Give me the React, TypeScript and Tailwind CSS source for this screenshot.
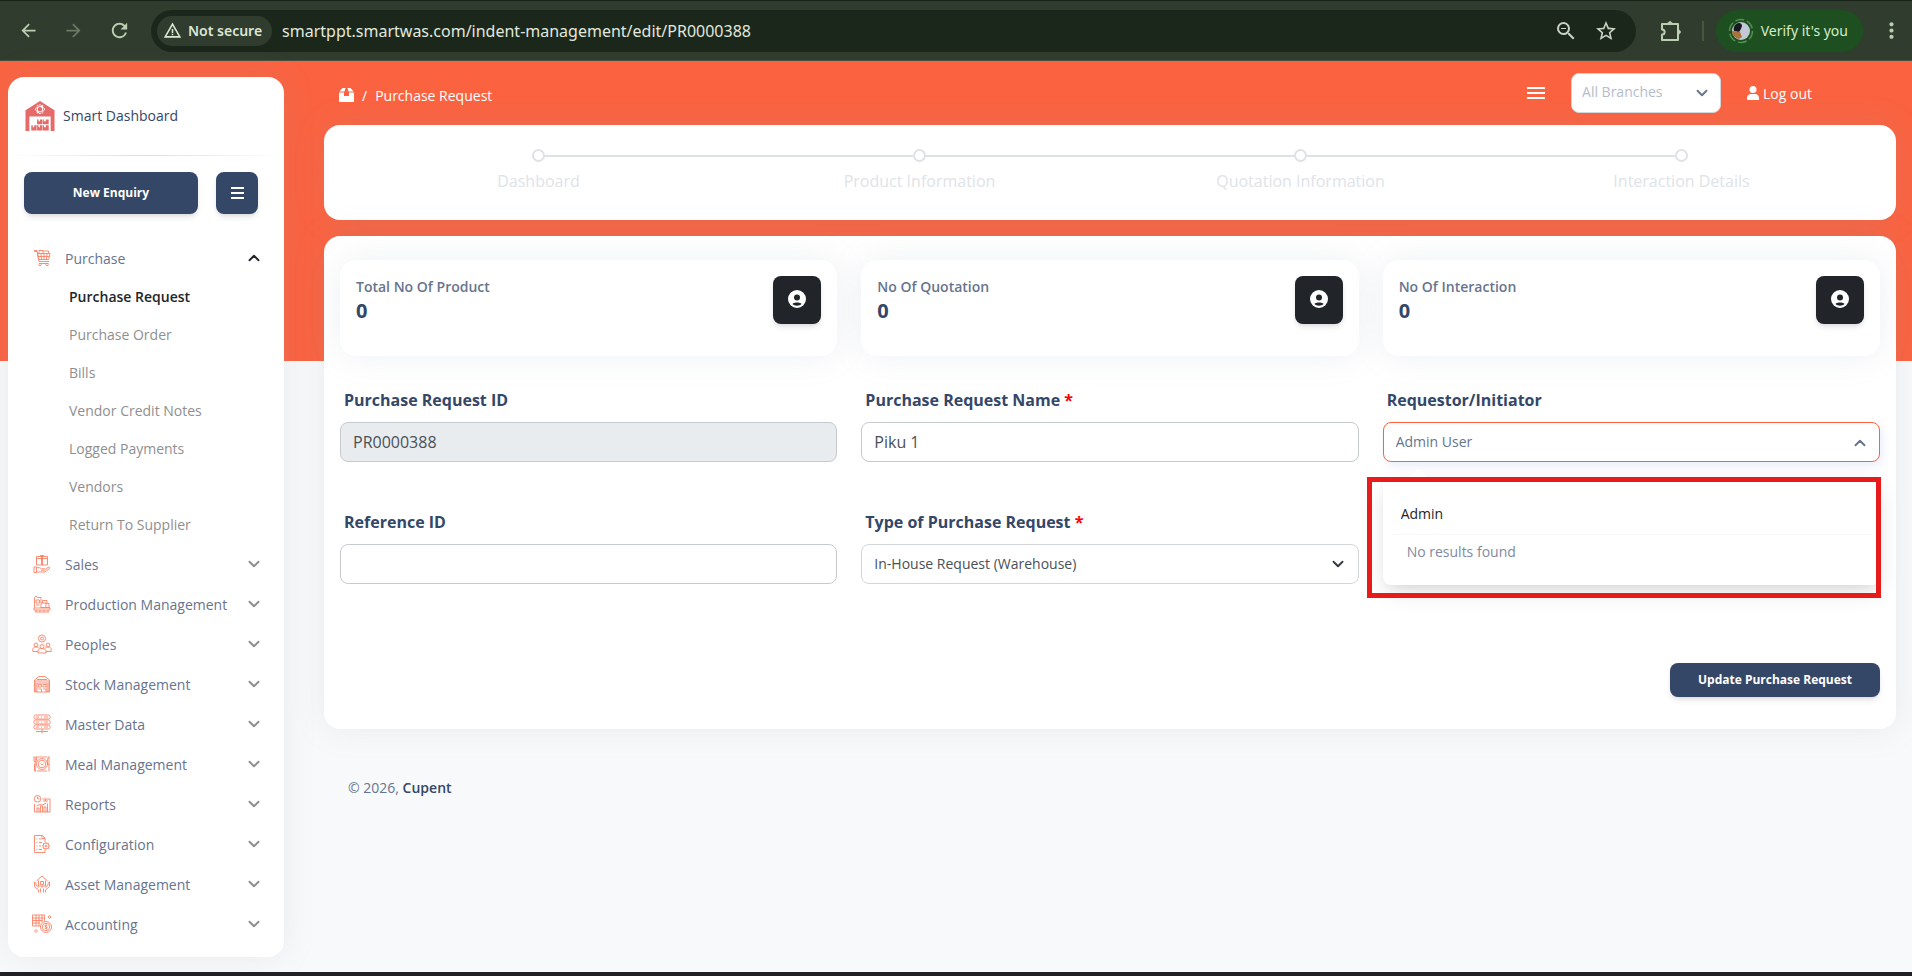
import React, {useState} from "react";
import {ChevronDown, ChevronUp} from "lucide-react";
import {
    MdArrowBack,
    MdArrowForward,
    MdRefresh,
    MdOutlineZoomOut,
    MdStarBorder,
    MdMoreVert,
    MdWarningAmber
} from "react-icons/md";

interface IMenuItem {
    name: string,
    icon: React.ReactNode,
    children?: string[]
}

const purchaseLinks = [
    "Purchase Request",
    "Purchase Order",
    "Bills",
    "Vendor Credit Notes",
    "Logged Payments",
    "Vendors",
    "Return To Supplier"
];

const menuItems: IMenuItem[] = [
    {
        name: "Purchase",
        children: purchaseLinks,
        icon: <>
            <path d="M2 2.5h3l2 11h10"/>
            <path d="M5.5 5.5H18l-1.3 6H6.8zM6 8.5h11.5M9 5.5l.5 6M12 5.5v6M15 5.5l-.5 6"/>
            <path d="M7 5V2.5h4V5M11 3h5.5v2M7.5 15.5h9M2 3.500h3"/>
            <circle cx="8" cy="16.5" r="1.2"/><circle cx="15" cy="16.5" r="1.2"/>
        </>
    },
    {
        name: "Sales",
        icon: <>
            <path d="M4.5 2.5h11V11h-11zM4.5 4.5h11M9.500 1.5V11M10.500 1.5V11M8 1.5h4"/>
            <path d="M2 13h2.5v5.5H2zM4.5 14c2-1 4 0 5 .8h3c1 0 1 1.4 0 1.4H9M13.5 15l3-1.8c1-.4 1.8.5 1 1.3L13 18H4.5"/>
        </>
    },
    {
        name: "Production Management",
        icon: <>
            <path d="M2.5 14V3.5L4 2l1.5 1.5H9V14M4 6h3.5v3H4zM4 11h3.5"/>
            <path d="M10.5 9V6.5H15V9M9 9h5v4M9 13.5h9M13.5 9.5H17V13M2 14h16v2H2z"/>
            <path d="M4 16v2M8 16v2M12 16v2M16 16v2M3 18h14"/>
        </>
    },
    {
        name: "Peoples",
        icon: <>
            <circle cx="10" cy="4.5" r="3.6"/><circle cx="10" cy="4.5" r="1.5"/>
            <circle cx="4" cy="11" r="1.9"/><circle cx="16" cy="11" r="1.9"/><circle cx="10" cy="12.5" r="2"/>
            <path d="M.8 17.5v-2c0-1.5 1-2.5 3.2-2.5 1.5 0 2.5.5 3 1.5M19.2 17.5v-2c0-1.5-1-2.5-3.2-2.5-1.5 0-2.5.5-3 1.5M6 19v-2c0-1.5 1.5-2.5 4-2.5s4 1 4 2.5v2zM.8 17.5H6M14 17.5h5.2"/>
        </>
    },
    {
        name: "Stock Management",
        icon: <>
            <path d="M2.5 18V6L7 2.5h6L17.5 6v12zM2.5 7h15M5 5.5h10M5 18V9h10v9"/>
            <path d="M6.5 10.5h3V13h-3zM11 10.5h3V13h-3zM6.5 15h3v3M11 15h3v3M3.8 8v10M16.2 8v10"/>
        </>
    },
    {
        name: "Master Data",
        icon: <>
            <rect x="2" y="1" width="16" height="4" rx="1.5"/>
            <rect x="2" y="6" width="16" height="4" rx="1.5"/>
            <rect x="2" y="11" width="16" height="4" rx="1.5"/>
            <path d="M4 3h3M9 3h1M12 3h4M4 8h3M9 8h1M12 8h4M4 13h3M9 13h1M12 13h4M10 15v4.5M4 17.5h12"/>
        </>
    },
    {
        name: "Meal Management",
        icon: <>
            <circle cx="10" cy="10" r="5.5"/><circle cx="10" cy="10" r="3.8"/>
            <path d="M2 2.5v4c0 1 .8 1.5 1.3 1.5S4.5 7.5 4.5 6.5v-4M3.2 2.5V17M2.5 10v7H4M17 17.5V2.5c-1.5 1-1.8 4-1.5 8H17M8.5 9.5c.8 1.5 2.2 1.5 3 0M5 3h10M5 17h10"/>
        </>
    },
    {
        name: "Reports",
        icon: <>
            <circle cx="5.5" cy="4.8" r="3.3"/><path d="M5.5 2.5v2.3h2"/>
            <path d="M10.5 5H18v13H2.5v-8M11 7h5M13.5 5v2"/>
            <path d="M5 18v-4h2v4M8.5 18v-6h2v6M12 18v-5h2v5M15.5 18V9.5M4.5 12l3-1.5 3 .5 4-2"/>
        </>
    },
    {
        name: "Configuration",
        icon: <>
            <path d="M13 8V4l-2.5-2.5h-8v17H13V16M10 1.5v3h3"/>
            <path d="M4.5 5h1M7 5h2.5M4.5 8.5h1M7 8.5h3M4.5 12h1M7 12h2M4.5 15.5h1M7 15.5h3"/>
            <circle cx="14" cy="12" r="3"/><circle cx="14" cy="12" r="1"/>
            <path d="M14 8v1M14 15v1M10 12h1M17 12h1M11.2 9.2l.7.7M16.1 14.1l.7.7M16.8 9.2l-.7.7M11.9 14.1l-.7.7"/>
        </>
    },
    {
        name: "Asset Management",
        icon: <>
            <path d="M4.5 7L10 2l5.5 5M6.5 6.5V12h7V6.5M8.5 7.5h3v3h-3zM10 12v2"/>
            <path d="M2.5 8v4.5L6.5 16v2.5M2.5 8C3.5 8 4 9 4 11l3 2.5M17.5 8v4.5L13.5 16v2.5M17.5 8C16.5 8 16 9 16 11l-3 2.5M8.5 14.5v4M11.5 14.5v4"/>
        </>
    },
    {
        name: "Accounting",
        icon: <>
            <path d="M.5 1h12v6M.5 1v11h8M.5 4h12M.5 6.5h10M.5 9h8M4 1v11M7 1v11M10 1v7"/>
            <circle cx="14" cy="13" r="5.5"/><circle cx="14" cy="13" r="3.7"/>
            <path d="M15.2 11.5c-.6-.7-2.2-.6-2.2.3 0 1.3 2.3.8 2.3 2 0 .9-1.7 1-2.4.2M14 10.5v5M17.500 1.5L19 3l-1.5 1.5L16 3zM4 15.5L5.5 17 4 18.5 2.5 17z"/>
        </>
    }
];

const MenuIcon = ({children}: { children: React.ReactNode }) => (
    <svg viewBox="0 0 20 20" className="size-5 shrink-0 opacity-80" fill="none" stroke="#fb6340" strokeWidth="0.9">
        {children}
    </svg>
)

const Bars = ({className}: { className: string }) => (
    <svg viewBox="0 0 18 12" preserveAspectRatio="none" className={className} stroke="currentColor" strokeWidth="2">
        <path d="M0 1h18M0 6h18M0 11h18"/>
    </svg>
)

const BrowserBar = () => {
    return (
        <header className="flex h-[61px] items-center border-y border-t-[#172316] border-b-[#46503f] bg-[#303c2e] font-['Noto_Sans','Open_Sans',sans-serif] text-[#b9cfb0]">
            <button aria-label="Back" className="ml-[18px]"><MdArrowBack size={21}/></button>
            <button aria-label="Forward" className="ml-6 text-[#6a7a64]"><MdArrowForward size={21}/></button>
            <button aria-label="Reload" className="ml-6"><MdRefresh size={23}/></button>
            <div className="ml-5 flex h-[42px] flex-1 items-center rounded-full bg-[#1b271a] pr-[18px] pl-1.5">
                <button className="flex h-[30px] shrink-0 items-center gap-1.5 rounded-full bg-[#303c2e] px-1.5 pr-2.5 text-[14px] font-semibold text-[#dbe6d4]">
                    <MdWarningAmber size={19}/>
                    Not secure
                </button>
                <input aria-label="Address" readOnly
                       value="smartppt.smartwas.com/indent-management/edit/PR0000388"
                       className="ml-2.5 min-w-0 flex-1 bg-transparent text-[16px] text-[#e2e8de] outline-none"/>
                <button aria-label="Zoom" className="mr-4 text-[#c9d2c4]"><MdOutlineZoomOut size={24}/></button>
                <button aria-label="Bookmark" className="text-[#c9d2c4]"><MdStarBorder size={24}/></button>
            </div>
            <button aria-label="Extensions" className="ml-[22px]">
                <svg viewBox="0 0 24 24" className="size-6" fill="none" stroke="currentColor" strokeWidth="2" strokeLinejoin="round">
                    <path d="M4 5h16v16H4v-5.5c3.5 0 3.5-5 0-5z"/>
                    <path d="M10 4.5c0-2.5 4-2.5 4 0zM20.5 11c2.5 0 2.5 4 0 4z" fill="currentColor" strokeWidth="1"/>
                </svg>
            </button>
            <div className="ml-5 h-5 w-0.5 bg-[#46563f]"/>
            <button className="ml-3 flex h-[42px] items-center gap-[7px] rounded-full bg-[#1e4f20] pr-[15px] pl-3 text-[14px] text-[#d3ecc9]">
                <svg viewBox="0 0 26 26" className="size-[26px]">
                    <circle cx="13" cy="13" r="11.5" fill="none" stroke="#4f9350" strokeWidth="1.5" strokeDasharray="9 3"/>
                    <circle cx="13" cy="13" r="9" fill="#c3c8d6"/>
                    <path d="M8 6c3-2 6-1 6 2l-1 3-2 3-5-1c-1-3 0-5 2-7z" fill="#17191c"/>
                    <path d="M4 13l8 1 2 5-3 2c-4-1-7-4-7-8z" fill="#a9713b"/>
                </svg>
                Verify it's you
            </button>
            <button aria-label="Menu" className="mr-2 ml-4"><MdMoreVert size={25}/></button>
        </header>
    )
}

const Sidebar = () => {
    return (
        <aside className="w-[276px] shrink-0 self-start rounded-2xl bg-white pb-[13px] shadow-[0_0_32px_rgba(136,152,170,0.15)]">
            <a href="#" className="flex h-[78px] items-center gap-2 pl-[17px] text-[14px] font-medium text-[#344767]">
                <svg viewBox="0 0 30 31" className="size-[30px]" fill="#e56b6b">
                    <path d="M15 0l15 9.5V31h-4V16H4v15H0V9.5z"/>
                    <path d="M15 4.500a4 4 0 100 8 4 4 0 000-8zm0 1.700a2.300 2.300 0 110 4.600 2.300 2.300 0 010-4.600zM14 3.500h2v2h-2zM14 11.500h2v2h-2zM10 7.500h2v2h-2zM18 7.500h2v2h-2zM11.500 5l1.400-1.200 1 1.700-1.200 1zM18.500 5l-1.400-1.200-1 1.700 1.200 1zM11.500 12l1.400 1.200 1-1.700-1.200-1zM18.500 12l-1.400 1.200-1-1.700 1.200-1z" fill="#fff"/>
                    <path d="M12 19h1.500v2H15v-2h2.500v5H12zM18 19h1v2h2v-2h3v5h-6zM6 25h1.500v2H9v-2h2.500v5.500H6zM12 25h1.500v2H15v-2h2.500v5.500H12zM18 25h1v2h2v-2h3v5.500h-6z"/>
                </svg>
                <span className="pb-0.5">Smart Dashboard</span>
            </a>
            <hr className="h-px border-0 bg-[linear-gradient(90deg,transparent,#dcdddf,transparent)]"/>
            <div className="mt-4 flex gap-[18px] px-4 pr-[26px]">
                <button className="h-[42px] flex-1 rounded-lg bg-[#344767] text-[12px] font-bold text-white shadow-md">New Enquiry</button>
                <button aria-label="Toggle menu" className="grid h-[42px] w-[42px] place-items-center rounded-lg bg-[#344767] text-white shadow-md">
                    <Bars className="h-3 w-[13px]"/>
                </button>
            </div>
            <nav className="mt-[25px]">
                {
                    menuItems.map((item) => (
                        <div key={item.name}>
                            <button className={item.children
                                ? "flex h-[38px] w-full items-center pr-[21px] pl-6 text-left text-[14px] text-[#67748e]"
                                : "flex h-10 w-full items-center pr-[21px] pl-6 text-left text-[14px] text-[#67748e]"}>
                                <MenuIcon>{item.icon}</MenuIcon>
                                <span className="ml-[13px] flex-1">{item.name}</span>
                                {item.children
                                    ? <ChevronUp size={18} strokeWidth={2.5} className="text-[#212529]"/>
                                    : <ChevronDown size={18} strokeWidth={2.5} className="text-[#8d8d8d]"/>}
                            </button>
                            {item.children && <ul className="pb-px">
                                {
                                    item.children.map((child, index) => (
                                        <li key={child}>
                                            <a href="#" className={index === 0
                                                ? "flex h-[38px] items-center pl-[61px] text-[14px] font-semibold text-[#212529]"
                                                : "flex h-[38px] items-center pl-[61px] text-[14px] text-[#8f8f8f]"}>{child}</a>
                                        </li>
                                    ))
                                }
                            </ul>}
                        </div>
                    ))
                }
            </nav>
        </aside>
    )
}

const TopNav = () => {
    return (
        <div className="flex h-16 items-center pr-[84px] pl-[15px] text-[14px] text-white">
            <nav aria-label="Breadcrumb" className="flex items-center gap-2 pt-1">
                <a href="#" aria-label="Home">
                    <svg viewBox="0 0 15 14" className="h-3.5 w-[15px]" fill="currentColor">
                        <path d="M0 4.500h5V8h5V4.500h5V14H0zM3.500 0h3l-1 3.500h-5zM8.500 0h3l3 3.500h-5z"/>
                    </svg>
                </a>
                <span>/</span>
                <span>Purchase Request</span>
            </nav>
            <button aria-label="Menu" className="mr-[26px] ml-auto"><Bars className="h-3 w-[18px]"/></button>
            <div className="relative">
                <select aria-label="Branch" className="h-10 w-[150px] appearance-none rounded-lg border border-[#d2d6da] bg-white px-2.5 pb-1 text-[14px] text-[#b5bccb]">
                    <option>All Branches</option>
                </select>
                <ChevronDown size={18} strokeWidth={2.5} className="pointer-events-none absolute top-[11px] right-2.5 text-[#67748e]"/>
            </div>
            <a href="#" className="ml-[26px] flex items-center gap-1">
                <svg viewBox="0 0 12 14" className="h-3.5 w-3" fill="currentColor">
                    <circle cx="6" cy="3.5" r="3.5"/><path d="M0 14v-2c0-2.5 2-4 4-4h4c2 0 4 1.5 4 4v2z"/>
                </svg>
                Log out
            </a>
        </div>
    )
}

const steps = ["Dashboard", "Product Information", "Quotation Information", "Interaction Details"];

const Stepper = () => {
    return (
        <ol className="grid h-[95px] grid-cols-4 rounded-2xl bg-white px-6 pt-6 shadow-[0_0_32px_rgba(136,152,170,0.15)]">
            {
                steps.map((step, index) => (
                    <li key={step} className="text-center text-[16px] text-[#e0e3e8]">
                        <div className="flex items-center">
                            <div className={index > 0 ? "h-0.5 flex-1 bg-[#dee2e6]" : "h-0.5 flex-1"}/>
                            <div className="size-[13px] rounded-full border-2 border-[#dee2e6]"/>
                            <div className={index < steps.length - 1 ? "h-0.5 flex-1 bg-[#dee2e6]" : "h-0.5 flex-1"}/>
                        </div>
                        <p className="mt-[7px]">{step}</p>
                    </li>
                ))
            }
        </ol>
    )
}

const StatCard = ({title, value}: { title: string, value: number }) => {
    return (
        <div className="flex h-24 items-start justify-between rounded-2xl bg-white p-4 shadow-[0_0_32px_rgba(136,152,170,0.15)]">
            <div>
                <p className="text-[14px] leading-[22px] font-semibold text-[#67748e]">{title}</p>
                <p className="text-[20px] leading-[26px] font-bold text-[#344767]">{value}</p>
            </div>
            <div className="grid size-12 place-items-center rounded-lg bg-[#212429] pb-0.5 shadow-md">
                <svg viewBox="0 0 18 18" className="size-[18px]">
                    <circle cx="9" cy="9" r="9" fill="#fff"/>
                    <circle cx="9" cy="7.5" r="3" fill="#212429"/>
                    <path d="M4.5 14c1-2 8-2 9 0-2 2.2-7 2.2-9 0z" fill="#212429"/>
                </svg>
            </div>
        </div>
    )
}

interface FieldProps {
    id: string,
    label: string,
    required?: boolean,
    children: React.ReactNode
}

const Field = ({id, label, required, children}: FieldProps) => {
    return (
        <div>
            <label htmlFor={id} className="mb-2.5 block pl-1 text-[16px] leading-6 font-bold text-[#344767]">
                {label}{required && <span className="text-[#ff0000]"> *</span>}
            </label>
            {children}
        </div>
    )
}

const RequestForm = () => {
    const [name, setName] = useState("Piku 1");
    const [reference, setReference] = useState("");
    const [search, setSearch] = useState("Admin");

    return (
        <form className="grid grid-cols-3 gap-x-6 gap-y-12 pt-8">
            <Field id="requestId" label="Purchase Request ID">
                <input id="requestId" disabled value="PR0000388"
                       className="h-10 w-full rounded-lg border border-[#c7cacd] bg-[#e9ecef] px-3 text-[16px] text-[#495057]"/>
            </Field>
            <Field id="requestName" label="Purchase Request Name" required>
                <input id="requestName" value={name} onChange={(e) => setName(e.target.value)}
                       className="h-10 w-full rounded-lg border border-[#c7cacd] bg-white px-3 text-[16px] text-[#495057]"/>
            </Field>
            <Field id="requestor" label="Requestor/Initiator">
                <div className="relative">
                    <button id="requestor" type="button" aria-expanded="true"
                            className="flex h-10 w-full items-center justify-between rounded-lg border border-[#fb6340] bg-white pr-2.5 pb-0.5 pl-3 text-[14px] text-[#67748e] shadow-[0_3px_9px_rgba(50,50,9,0.02),3px_4px_8px_rgba(94,114,228,0.1)]">
                        Admin User
                        <ChevronUp size={18} strokeWidth={2.5} className="mt-1"/>
                    </button>
                    <div className="absolute inset-x-0 top-[55px] rounded-lg bg-white px-2 py-4 shadow-[0_8px_26px_-4px_rgba(20,20,20,0.15),0_8px_9px_-5px_rgba(20,20,20,0.06)]">
                        <div className="absolute -top-1.5 left-[29px] size-3 rotate-45 bg-white"/>
                        <input aria-label="Search requestor" value={search} onChange={(e) => setSearch(e.target.value)}
                               className="h-[42px] w-full border-b border-[#f6f7f8] px-2.5 text-[14px] text-[#212529] outline-none"/>
                        <p className="px-4 text-[14px] leading-[34px] text-[#7f8aa2]">No results found</p>
                    </div>
                    <div className="pointer-events-none absolute -right-px -left-4 top-[55px] h-[121px] border-[5px] border-[#e81b1b]"/>
                </div>
            </Field>
            <Field id="reference" label="Reference ID">
                <input id="reference" value={reference} onChange={(e) => setReference(e.target.value)}
                       className="h-10 w-full rounded-lg border border-[#c7cacd] bg-white px-3 text-[16px] text-[#495057]"/>
            </Field>
            <Field id="requestType" label="Type of Purchase Request" required>
                <div className="relative">
                    <select id="requestType"
                            className="h-10 w-full appearance-none rounded-lg border border-[#d2d6da] bg-white px-3 pb-0.5 text-[14px] text-[#495057]">
                        <option>In-House Request (Warehouse)</option>
                    </select>
                    <ChevronDown size={18} strokeWidth={2.5} className="pointer-events-none absolute top-[11px] right-3 text-[#343a40]"/>
                </div>
            </Field>
            <div className="col-span-3 mt-[31px] flex justify-end">
                <button type="button" className="h-[34px] rounded-lg bg-[#344767] px-7 text-[12px] font-bold text-white shadow-md">
                    Update Purchase Request
                </button>
            </div>
        </form>
    )
}

const App = () => {
    return (
        <div className="flex min-h-screen flex-col font-['Open_Sans','Noto_Sans',sans-serif]">
            <BrowserBar/>
            <div className="flex flex-1 gap-10 bg-[linear-gradient(#fb6340_300px,#f8f9fa_300px)] pr-4 pl-2">
                <div className="flex pt-4 pb-[15px]"><Sidebar/></div>
                <main className="min-w-0 flex-1">
                    <TopNav/>
                    <Stepper/>
                    <section className="mt-4 rounded-2xl bg-white px-4 pt-6 pb-8 shadow-[0_0_32px_rgba(136,152,170,0.15)]">
                        <div className="grid grid-cols-3 gap-6">
                            <StatCard title="Total No Of Product" value={0}/>
                            <StatCard title="No Of Quotation" value={0}/>
                            <StatCard title="No Of Interaction" value={0}/>
                        </div>
                        <RequestForm/>
                    </section>
                    <footer className="mt-[47px] px-6 text-[14px] leading-6 text-[#67748e]">
                        © 2026, <a href="#" className="font-semibold text-[#344767]">Cupent</a>
                    </footer>
                </main>
            </div>
            <div className="h-1 bg-[#212125]"/>
        </div>
    )
}

export default App
